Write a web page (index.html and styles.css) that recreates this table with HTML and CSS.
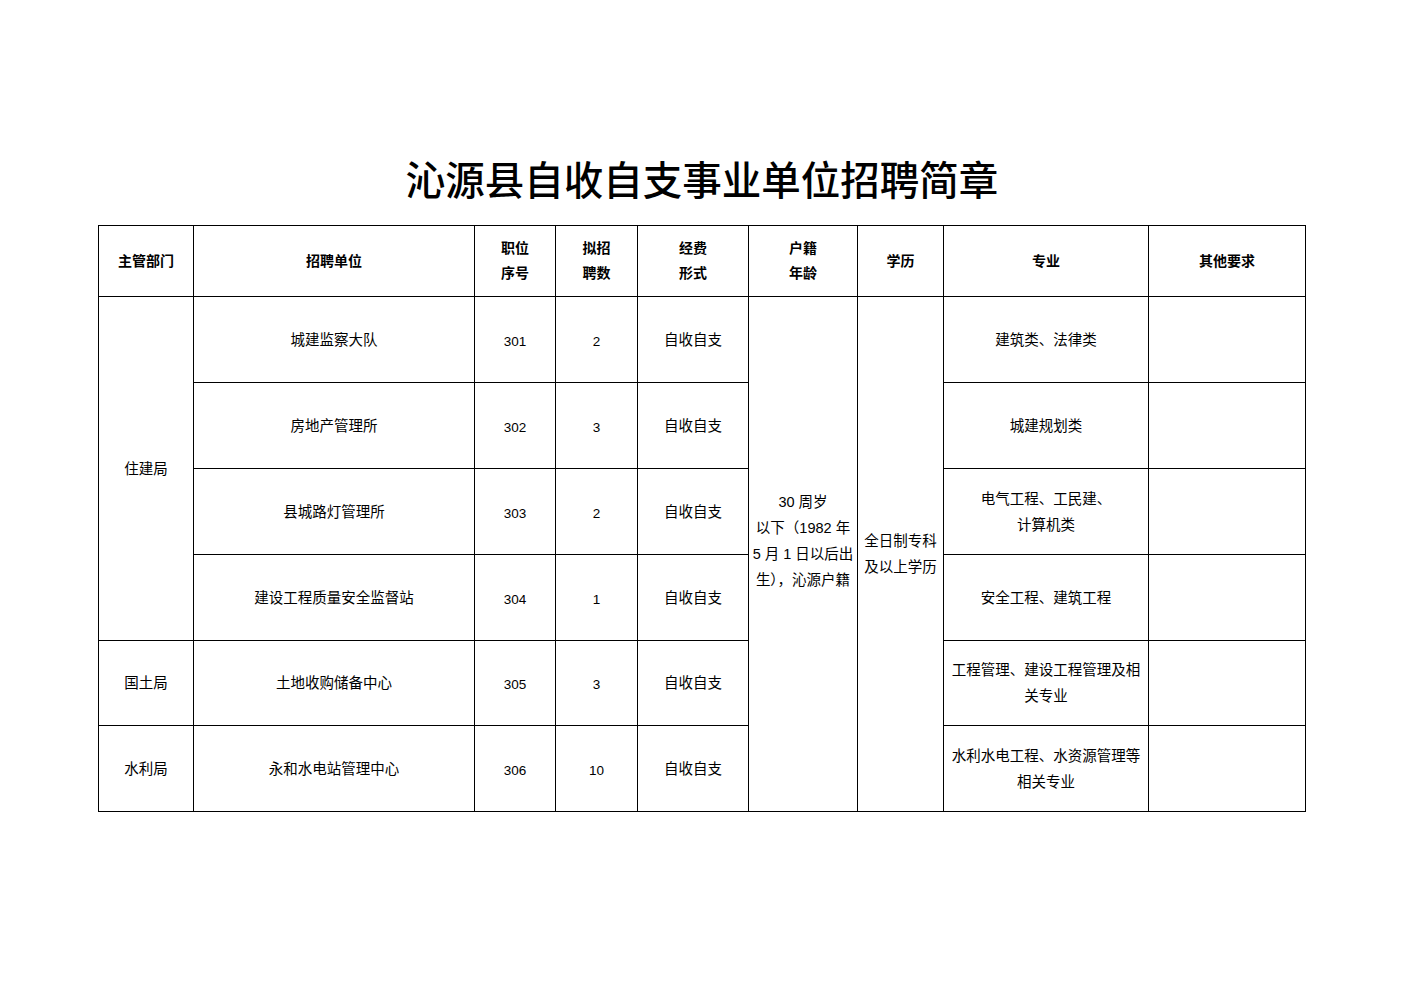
FILE: index.html
```html
<!DOCTYPE html>
<html lang="zh-CN">
<head>
<meta charset="utf-8">
<title>沁源县自收自支事业单位招聘简章</title>
<link rel="stylesheet" href="styles.css">
</head>
<body>
<div class="page">
  <h1 class="title">沁源县自收自支事业单位招聘简章</h1>
  <table class="grid">
    <colgroup>
      <col class="c1"><col class="c2"><col class="c3"><col class="c4"><col class="c5"><col class="c6"><col class="c7"><col class="c8"><col class="c9">
    </colgroup>
    <thead>
      <tr class="head">
        <th>主管部门</th>
        <th>招聘单位</th>
        <th>职位<br>序号</th>
        <th>拟招<br>聘数</th>
        <th>经费<br>形式</th>
        <th>户籍<br>年龄</th>
        <th>学历</th>
        <th>专业</th>
        <th>其他要求</th>
      </tr>
    </thead>
    <tbody>
      <tr class="row">
        <td rowspan="4">住建局</td>
        <td>城建监察大队</td>
        <td class="num">301</td>
        <td class="num">2</td>
        <td>自收自支</td>
        <td rowspan="6" class="merged"><div class="clip">30 周岁<br>以下（1982 年<br>5 月 1 日以后出<br>生），沁源户籍</div></td>
        <td rowspan="6" class="edu">全日制专科<br>及以上学历</td>
        <td>建筑类、法律类</td>
        <td></td>
      </tr>
      <tr class="row">
        <td>房地产管理所</td>
        <td class="num">302</td>
        <td class="num">3</td>
        <td>自收自支</td>
        <td>城建规划类</td>
        <td></td>
      </tr>
      <tr class="row">
        <td>县城路灯管理所</td>
        <td class="num">303</td>
        <td class="num">2</td>
        <td>自收自支</td>
        <td>电气工程、工民建、<br>计算机类</td>
        <td></td>
      </tr>
      <tr class="row">
        <td>建设工程质量安全监督站</td>
        <td class="num">304</td>
        <td class="num">1</td>
        <td>自收自支</td>
        <td>安全工程、建筑工程</td>
        <td></td>
      </tr>
      <tr class="row r5">
        <td>国土局</td>
        <td>土地收购储备中心</td>
        <td class="num">305</td>
        <td class="num">3</td>
        <td>自收自支</td>
        <td>工程管理、建设工程管理及相<br>关专业</td>
        <td></td>
      </tr>
      <tr class="row">
        <td>水利局</td>
        <td>永和水电站管理中心</td>
        <td class="num">306</td>
        <td class="num">10</td>
        <td>自收自支</td>
        <td>水利水电工程、水资源管理等<br>相关专业</td>
        <td></td>
      </tr>
    </tbody>
  </table>
</div>
</body>
</html>
```

FILE: styles.css
```css
html, body {
  margin: 0;
  padding: 0;
  background: #fff;
}
body {
  font-family: "Liberation Sans", "Noto Sans CJK SC", sans-serif;
  color: #000;
}
.page {
  width: 1404px;
  padding-top: 150px;
}
.title {
  margin: 0;
  height: 56px;
  line-height: 56px;
  text-align: center;
  font-family: "Noto Sans CJK SC", sans-serif;
  font-weight: 500;
  font-size: 39.5px;
  letter-spacing: 0;
}
.grid {
  margin: 19px 0 0 98px;
  width: 1207px;
  table-layout: fixed;
  border-collapse: collapse;
}
.c1 { width: 95px; }
.c2 { width: 281px; }
.c3 { width: 81px; }
.c4 { width: 82px; }
.c5 { width: 111px; }
.c6 { width: 109px; }
.c7 { width: 86px; }
.c8 { width: 205px; }
.c9 { width: 157px; }
.grid th, .grid td {
  border: 1px solid #000;
  padding: 0;
  text-align: center;
  vertical-align: middle;
  font-size: 14.5px;
  line-height: 26px;
  font-weight: normal;
}
.grid th {
  font-weight: bold;
  font-size: 14px;
  line-height: 25px;
}
.head { height: 71px; }
.row { height: 86px; }
.row.r5 { height: 85px; }
.grid td.num {
  font-size: 13.5px;
  padding-top: 4px;
}
.grid td.merged {
  padding-bottom: 26px;
}
.clip {
  white-space: nowrap;
  overflow: hidden;
  font-size: 14.5px;
}
.grid td.edu {
  font-size: 14.5px;
}
```
